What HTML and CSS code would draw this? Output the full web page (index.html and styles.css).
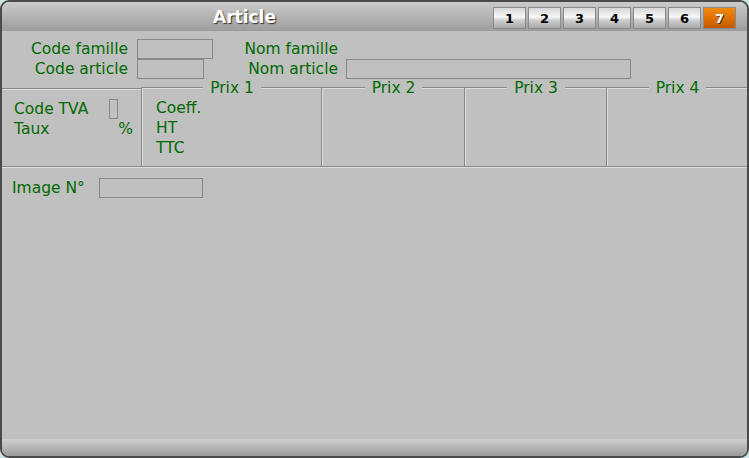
FILE: index.html
```html
<!DOCTYPE html>
<html lang="fr">
<head>
  <meta charset="UTF-8">
  <title>Article</title>
  <link rel="stylesheet" href="styles.css">
</head>
<body>
  <div class="window">
    <header class="titlebar">
      <div class="title">Article</div>
      <nav class="tabs">
        <span class="tab">1</span>
        <span class="tab">2</span>
        <span class="tab">3</span>
        <span class="tab">4</span>
        <span class="tab">5</span>
        <span class="tab">6</span>
        <span class="tab active">7</span>
      </nav>
    </header>

    <main class="content">
      <div class="head">
        <label class="lbl">Code famille</label>
        <span class="field w-famille"></span>
        <label class="lbl lbl-nom">Nom famille</label>
        <span></span>

        <label class="lbl">Code article</label>
        <span class="field w-article"></span>
        <label class="lbl lbl-nom">Nom article</label>
        <span class="field w-nom"></span>
      </div>

      <div class="prices">
        <div class="tva">
          <div class="row">
            <span>Code TVA</span>
            <span class="field tiny"></span>
          </div>
          <div class="row">
            <span>Taux</span>
            <span class="pct">%</span>
          </div>
        </div>

        <fieldset class="prix prix-1">
          <legend>Prix 1</legend>
          <div class="line">Coeff.</div>
          <div class="line">HT</div>
          <div class="line">TTC</div>
        </fieldset>
        <fieldset class="prix prix-2">
          <legend>Prix 2</legend>
        </fieldset>
        <fieldset class="prix prix-3">
          <legend>Prix 3</legend>
        </fieldset>
        <fieldset class="prix prix-4">
          <legend>Prix 4</legend>
        </fieldset>
      </div>

      <div class="image-row">
        <label class="lbl-image">Image N°</label>
        <span class="field w-image"></span>
      </div>
    </main>

    <footer class="statusbar"></footer>
  </div>
</body>
</html>
```

FILE: styles.css
```css
body {
  margin: 0;
  background: #cfe6e6;
  font-family: "DejaVu Sans", Verdana, sans-serif;
  font-size: 15.5px;
  color: #006a00;
}

.window {
  width: 749px;
  height: 458px;
  box-sizing: border-box;
  border: 2px solid #4a4a4a;
  border-radius: 9px;
  background: #c0c0c0;
  display: flex;
  flex-direction: column;
  overflow: hidden;
}

/* barre de titre */
.titlebar {
  height: 29px;
  flex: none;
  display: flex;
  align-items: center;
  padding-right: 11px;
  background: linear-gradient(#cbcbcb, #9c9c9c);
}

.title {
  flex: 1;
  padding-right: 6px;
  text-align: center;
  color: #fff;
  font-weight: bold;
  font-size: 17px;
  text-shadow: 1px 1px 1px #333;
}

.tabs {
  display: flex;
  gap: 2px;
  margin-top: 3px;
}

.tab {
  width: 33px;
  height: 22px;
  box-sizing: border-box;
  border: 1px solid #8a8a8a;
  background: linear-gradient(#d6d6d6, #f8f8f8 45%, #d0d0d0 60%, #a8a8a8);
  color: #000;
  font-weight: bold;
  font-size: 13px;
  display: flex;
  align-items: center;
  justify-content: center;
}

.tab.active {
  background: linear-gradient(#f08a10, #e07000 50%, #c05a00);
  color: #fff;
  text-shadow: 1px 1px 0 #333;
}

/* contenu */
.content {
  flex: 1;
  padding-top: 8px;
}

.field {
  display: block;
  height: 20px;
  box-sizing: border-box;
  border: 1px solid #888;
}

.head {
  display: grid;
  grid-template-columns: 135px 106px 103px 285px;
  grid-auto-rows: 20px;
  align-items: center;
}

.lbl {
  text-align: right;
  padding-right: 9px;
  white-space: nowrap;
}

.lbl-nom {
  padding-right: 8px;
}

.w-famille { width: 76px; }
.w-article { width: 67px; }
.w-nom { width: 285px; }

.prices {
  display: flex;
  height: 88px;
  box-sizing: border-box;
  margin-top: 1px;
  border-bottom: 2px groove #dcdcdc;
}

.tva {
  width: 139px;
  flex: none;
  box-sizing: border-box;
  margin-top: 8px;
  padding: 9px 8px 0 12px;
  border-top: 2px groove #dcdcdc;
}

.row {
  display: grid;
  grid-template-columns: 95px 1fr;
  align-items: center;
  height: 20px;
}

.tiny {
  width: 9px;
}

.pct {
  justify-self: end;
}

fieldset.prix {
  margin: 0;
  padding: 2px 0 0;
  min-width: 0;
  flex: none;
  box-sizing: border-box;
  border: 0;
  border-top: 2px groove #dcdcdc;
  border-left: 2px groove #dcdcdc;
}

.prix legend {
  margin: 0 auto;
  padding: 0 7px;
  line-height: 16px;
}

.prix-1 { width: 180px; }
.prix-2 { width: 143px; }
.prix-3 { width: 142px; }
.prix-4 { width: 141px; }

.line {
  height: 20px;
  line-height: 20px;
  padding-left: 13px;
}

.image-row {
  display: flex;
  align-items: center;
  margin-top: 10px;
}

.lbl-image {
  width: 87px;
  padding-left: 10px;
}

.w-image { width: 104px; }

.statusbar {
  height: 17px;
  flex: none;
  background: linear-gradient(#d0d0d0, #9a9a9a);
}
```
